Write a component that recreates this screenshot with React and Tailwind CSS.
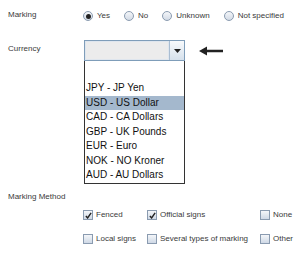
const CURRENCIES = [
  '',
  'JPY - JP Yen',
  'USD - US Dollar',
  'CAD - CA Dollars',
  'GBP - UK Pounds',
  'EUR - Euro',
  'NOK - NO Kroner',
  'AUD - AU Dollars',
]

function Radio({ label, checked }) {
  return (
    <label className="flex items-center gap-[4px]">
      <span className="flex h-[10px] w-[10px] items-center justify-center rounded-full border border-[#8a9bb0] bg-gradient-to-b from-[#f4f6f9] to-[#d3dbe6]">
        {checked && <span className="h-[5px] w-[5px] rounded-full bg-[#222]" />}
      </span>
      <span>{label}</span>
    </label>
  )
}

function Check({ label, checked }) {
  return (
    <label className="flex items-center gap-[3px]">
      <span className="relative h-[10px] w-[10px] border border-[#8a9bb0] bg-gradient-to-b from-[#f4f6f9] to-[#cfd9e6]">
        {checked && (
          <svg className="absolute left-[1px] top-[1px] h-[7px] w-[7px]" viewBox="0 0 8 8">
            <path d="M1 4.5 L3 6.8 L7 1" fill="none" stroke="#222" strokeWidth="1.6" />
          </svg>
        )}
      </span>
      <span>{label}</span>
    </label>
  )
}

export default function App() {
  return (
    <div className="h-[255px] w-[300px] bg-white font-['Liberation_Sans',Arial,sans-serif] text-[8px] text-[#3a3a3a]">
      <div className="flex pt-[9px]">
        <div className="w-[83px] pl-[8px]">Marking</div>
        <div className="flex gap-[14px] pt-[1px]">
          <Radio label="Yes" checked />
          <Radio label="No" />
          <Radio label="Unknown" />
          <Radio label="Not specified" />
        </div>
      </div>

      <div className="mt-[18px] flex">
        <div className="w-[84px] pl-[8px] pt-[3px]">Currency</div>
        <div className="w-[101px]">
          <div className="flex h-[21px] w-full border border-[#7f9db9]">
            <div className="flex-1 border border-[#dfe6ee] bg-[#ececec]" />
            <div className="flex w-[15px] items-center justify-center border-l border-[#a9bdd2] bg-gradient-to-b from-[#f8fafc] to-[#d6e1ec]">
              <svg width="7" height="4" viewBox="0 0 7 4">
                <path d="M0 0 H7 L3.5 4 Z" fill="#222" />
              </svg>
            </div>
          </div>
          <ul className="border border-t-0 border-[#333] bg-white pt-[1px] text-[10px] leading-[14.5px] text-[#111]">
            {CURRENCIES.map((c, i) => (
              <li
                key={i}
                className={`px-[1px] ${i === 0 ? 'h-[19px]' : 'h-[14.5px]'} ${c === 'USD - US Dollar' ? 'bg-[#a4b8cd]' : ''}`}
              >
                {c}
              </li>
            ))}
          </ul>
        </div>
        <div className="ml-[14px] pt-[6px]">
          <svg width="24" height="10" viewBox="0 0 24 10">
            <path d="M0 5 L8 0.5 L8 3.8 H24 V6.2 H8 V9.5 Z" fill="#222" />
          </svg>
        </div>
      </div>

      <div className="mt-[7px] flex">
        <div className="w-[83px] pl-[8px]">Marking Method</div>
        <div className="grid grid-cols-[64px_113px_auto] gap-y-[12px] pt-[18px]">
          <Check label="Fenced" checked />
          <Check label="Official signs" checked />
          <Check label="None" />
          <Check label="Local signs" />
          <Check label="Several types of marking" />
          <Check label="Other" />
        </div>
      </div>
    </div>
  )
}
